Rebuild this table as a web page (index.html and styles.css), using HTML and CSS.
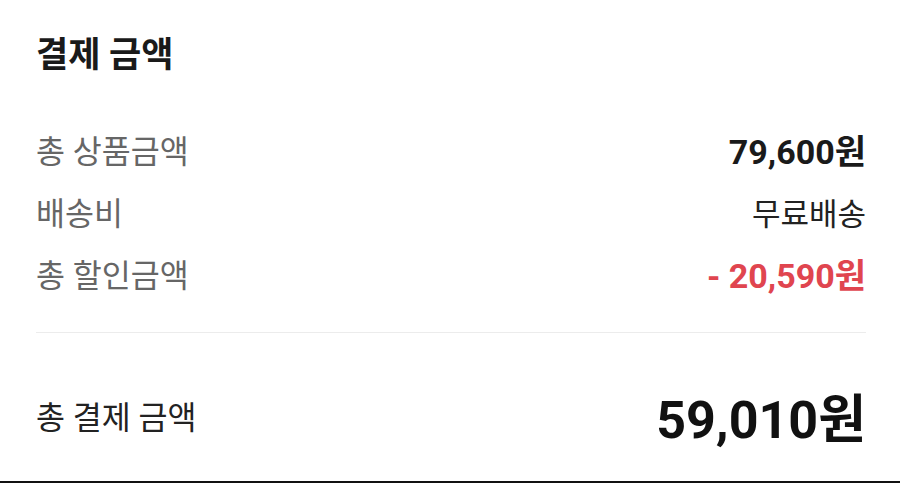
FILE: index.html
```html
<!DOCTYPE html>
<html lang="ko">
<head>
<meta charset="utf-8">
<link rel="stylesheet" href="styles.css">
</head>
<body>
<section class="payment">
  <h2 class="title">결제 금액</h2>
  <div class="rows">
    <div class="row"><span class="label">총 상품금액</span><span class="value strong">79,600원</span></div>
    <div class="row"><span class="label">배송비</span><span class="value">무료배송</span></div>
    <div class="row"><span class="label">총 할인금액</span><span class="value strong discount">- 20,590원</span></div>
  </div>
  <hr class="divider">
  <div class="total"><span class="total-label">총 결제 금액</span><span class="total-value">59,010원</span></div>
</section>
</body>
</html>
```
FILE: styles.css
```css
html, body {
  margin: 0;
  padding: 0;
  background: #fff;
}
body {
  font-family: Roboto, "Noto Sans CJK KR", sans-serif;
  width: 900px;
  height: 483px;
  overflow: hidden;
}
.payment {
  box-sizing: border-box;
  height: 483px;
  padding: 36px 34px 0 36px;
  border-bottom: 2px solid #111;
}
.title {
  margin: 0;
  font-size: 35px;
  line-height: 40px;
  font-weight: 700;
  color: #1a1a1a;
}
.rows {
  margin-top: 42px;
  display: flex;
  flex-direction: column;
}
.row {
  height: 62px;
  display: flex;
  justify-content: space-between;
  align-items: center;
}
.label {
  font-size: 31.5px;
  color: #666;
}
.value {
  font-size: 31px;
  color: #222;
}
.value.strong {
  font-weight: 700;
  font-size: 34px;
  color: #1a1a1a;
}
.value.discount {
  color: #e0454f;
}
.divider {
  margin: 28px 0 0 0;
  border: 0;
  height: 1px;
  background: #ececec;
}
.total {
  margin-top: 52px;
  height: 60px;
  display: flex;
  justify-content: space-between;
  align-items: center;
}
.total-label {
  font-size: 31.5px;
  color: #222;
}
.total-value {
  font-size: 52px;
  font-weight: 700;
  color: #111;
}
```
